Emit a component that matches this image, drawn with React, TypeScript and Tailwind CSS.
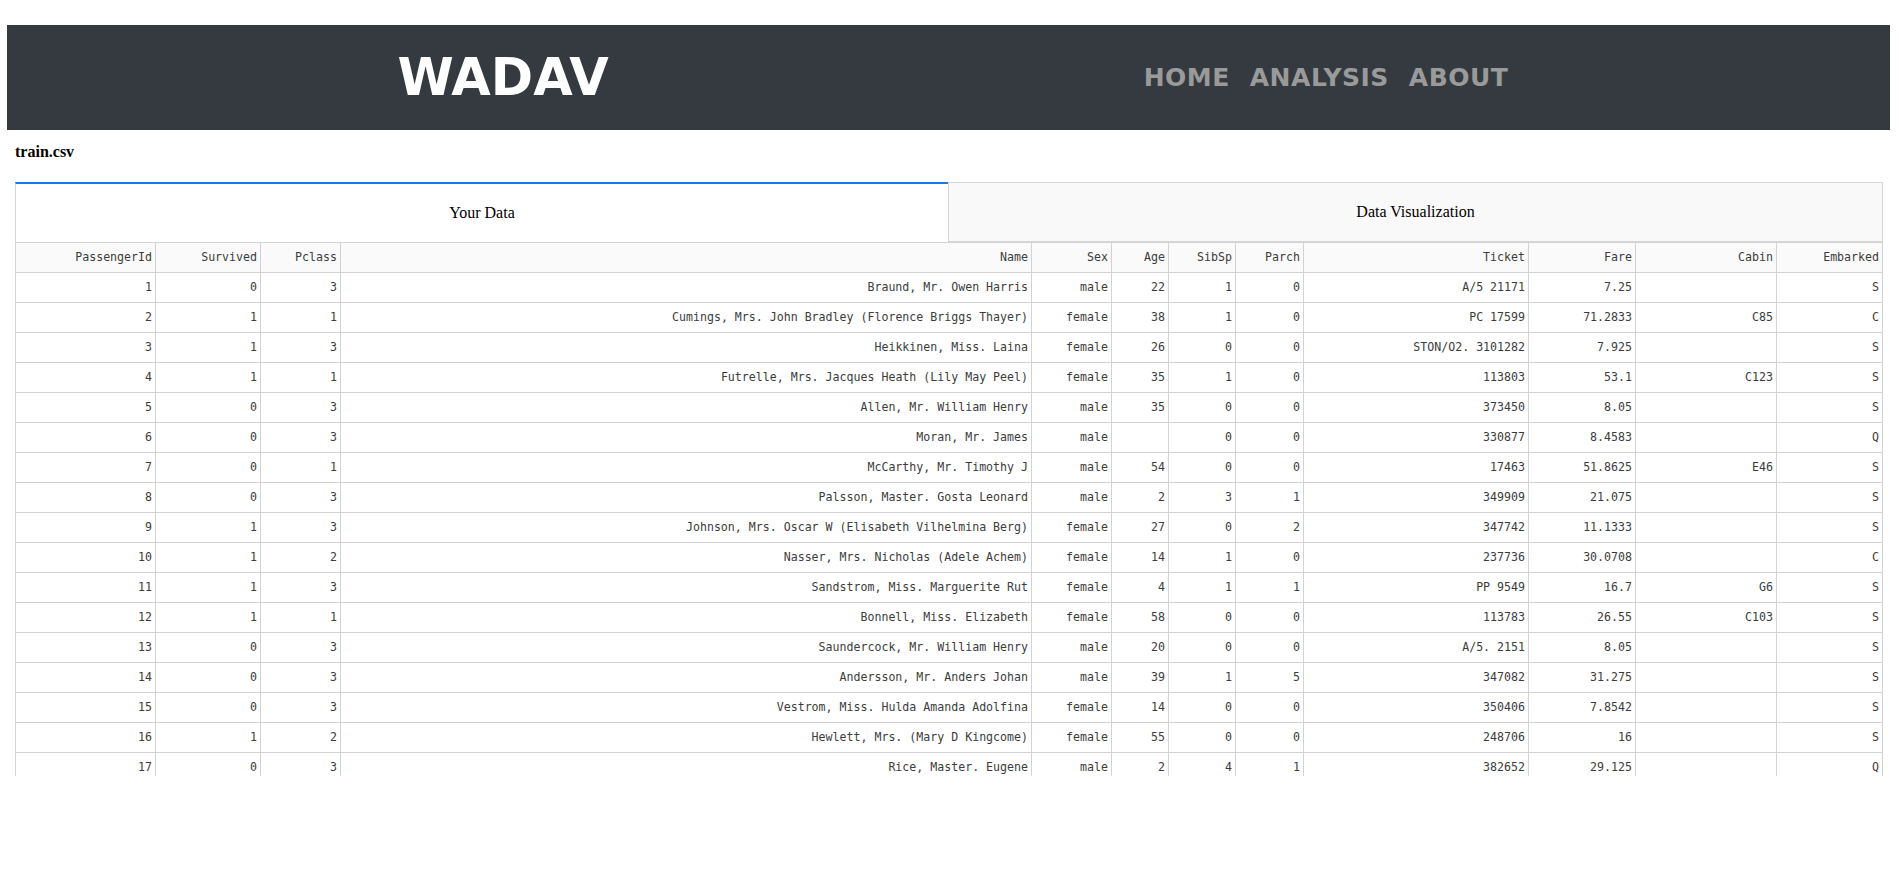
import React from "react";

// column widths measured from the reference
const columns = [
    { key: "PassengerId", width: 140 },
    { key: "Survived", width: 105 },
    { key: "Pclass", width: 80 },
    { key: "Name", width: 691 },
    { key: "Sex", width: 80 },
    { key: "Age", width: 57 },
    { key: "SibSp", width: 67 },
    { key: "Parch", width: 68 },
    { key: "Ticket", width: 225 },
    { key: "Fare", width: 107 },
    { key: "Cabin", width: 141 },
    { key: "Embarked", width: 106 },
];

const rows: string[][] = [
    ["1", "0", "3", "Braund, Mr. Owen Harris", "male", "22", "1", "0", "A/5 21171", "7.25", "", "S"],
    ["2", "1", "1", "Cumings, Mrs. John Bradley (Florence Briggs Thayer)", "female", "38", "1", "0", "PC 17599", "71.2833", "C85", "C"],
    ["3", "1", "3", "Heikkinen, Miss. Laina", "female", "26", "0", "0", "STON/O2. 3101282", "7.925", "", "S"],
    ["4", "1", "1", "Futrelle, Mrs. Jacques Heath (Lily May Peel)", "female", "35", "1", "0", "113803", "53.1", "C123", "S"],
    ["5", "0", "3", "Allen, Mr. William Henry", "male", "35", "0", "0", "373450", "8.05", "", "S"],
    ["6", "0", "3", "Moran, Mr. James", "male", "", "0", "0", "330877", "8.4583", "", "Q"],
    ["7", "0", "1", "McCarthy, Mr. Timothy J", "male", "54", "0", "0", "17463", "51.8625", "E46", "S"],
    ["8", "0", "3", "Palsson, Master. Gosta Leonard", "male", "2", "3", "1", "349909", "21.075", "", "S"],
    ["9", "1", "3", "Johnson, Mrs. Oscar W (Elisabeth Vilhelmina Berg)", "female", "27", "0", "2", "347742", "11.1333", "", "S"],
    ["10", "1", "2", "Nasser, Mrs. Nicholas (Adele Achem)", "female", "14", "1", "0", "237736", "30.0708", "", "C"],
    ["11", "1", "3", "Sandstrom, Miss. Marguerite Rut", "female", "4", "1", "1", "PP 9549", "16.7", "G6", "S"],
    ["12", "1", "1", "Bonnell, Miss. Elizabeth", "female", "58", "0", "0", "113783", "26.55", "C103", "S"],
    ["13", "0", "3", "Saundercock, Mr. William Henry", "male", "20", "0", "0", "A/5. 2151", "8.05", "", "S"],
    ["14", "0", "3", "Andersson, Mr. Anders Johan", "male", "39", "1", "5", "347082", "31.275", "", "S"],
    ["15", "0", "3", "Vestrom, Miss. Hulda Amanda Adolfina", "female", "14", "0", "0", "350406", "7.8542", "", "S"],
    ["16", "1", "2", "Hewlett, Mrs. (Mary D Kingcome)", "female", "55", "0", "0", "248706", "16", "", "S"],
    ["17", "0", "3", "Rice, Master. Eugene", "male", "2", "4", "1", "382652", "29.125", "", "Q"],
];

// top bar
const NavBar = () => {
    return (
        <nav className="ml-[7px] mr-[9px] mt-[25px] h-[105px] bg-[#343a40] flex items-center font-['DejaVu_Sans',sans-serif]">
            <div className="w-[992px] flex justify-center">
                <h1 className="text-white font-bold text-[51px] leading-none">
                    WADAV
                </h1>
            </div>
            <ul className="w-[654px] flex justify-center gap-[20px] text-[#9a9a9a] font-bold text-[25px] leading-none tracking-[0.5px]">
                <li>HOME</li>
                <li>ANALYSIS</li>
                <li>ABOUT</li>
            </ul>
        </nav>
    );
};

// tabs
const Tabs = () => {
    return (
        <div className="flex h-[60px] font-['Liberation_Serif',serif] text-[16px] text-black">
            <div className="w-[933px] flex items-center justify-center bg-white border-l border-[#d6d6d6] border-t-2 border-t-[#1975fa]">
                Your Data
            </div>
            <div className="w-[935px] flex items-center justify-center bg-[#f9f9f9] border border-[#d6d6d6]">
                Data Visualization
            </div>
        </div>
    );
};

// data table
const DataTable = () => {
    return (
        <div className="h-[534px] overflow-hidden">
            <table className="table-fixed border-collapse font-['DejaVu_Sans_Mono',monospace] text-[11.6px] text-[#3c3c3c]">
                <colgroup>
                    {columns.map((col) => (
                        <col key={col.key} style={{ width: col.width }} />
                    ))}
                </colgroup>
                <thead>
                    <tr className="h-[30px] bg-[#fafafa]">
                        {columns.map((col) => (
                            <th
                                key={col.key}
                                className="border border-[#d3d3d3] text-right font-normal pr-[3px] whitespace-nowrap"
                            >
                                {col.key}
                            </th>
                        ))}
                    </tr>
                </thead>
                <tbody>
                    {rows.map((row, i) => (
                        <tr key={i} className="h-[30px] bg-white">
                            {row.map((cell, j) => (
                                <td
                                    key={j}
                                    className="border border-[#d3d3d3] text-right pr-[3px] whitespace-nowrap"
                                >
                                    {cell}
                                </td>
                            ))}
                        </tr>
                    ))}
                </tbody>
            </table>
        </div>
    );
};

export default function App() {
    return (
        <div className="min-h-[872px] bg-white">
            <NavBar />
            <div className="pl-[15px] pr-[16px]">
                <p className="mt-[12px] font-['Liberation_Serif',serif] font-bold text-[16px] leading-[20px] text-black">
                    train.csv
                </p>
                <div className="mt-[20px]">
                    <Tabs />
                    <DataTable />
                </div>
            </div>
        </div>
    );
}
